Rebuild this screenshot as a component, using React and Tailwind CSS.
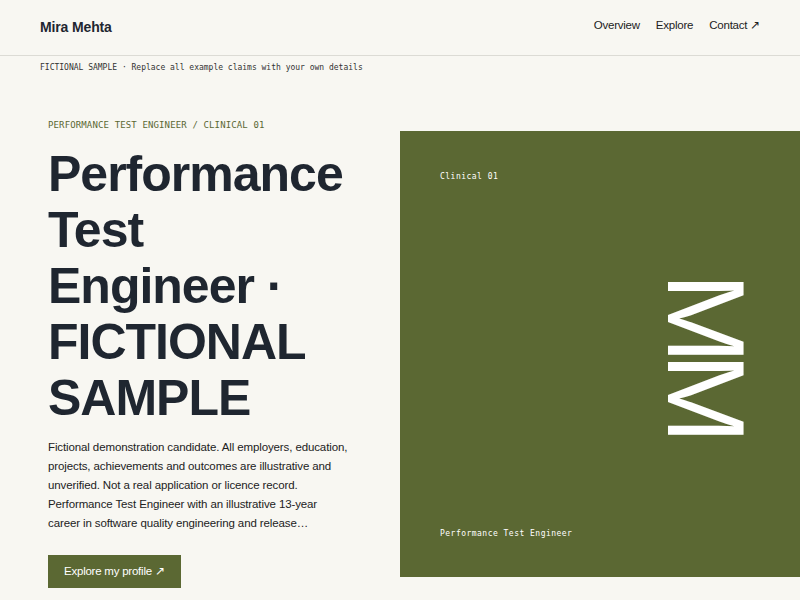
const sans = { fontFamily: '"Liberation Sans", Arial, Helvetica, sans-serif' };
const mono = { fontFamily: '"DejaVu Sans Mono", "Liberation Mono", monospace' };

const NAV = ['Overview', 'Explore', 'Contact ↗'];

export default function App() {
  return (
    <div className="min-h-screen bg-[#f8f7f2] text-[#1f2630]" style={sans}>
      <header className="flex h-14 items-center justify-between border-b border-[#dcdbd5] px-10">
        <span className="text-[14px] font-bold tracking-[-0.01em]">Mira Mehta</span>
        <nav className="mb-[4px] flex items-center gap-4 text-[11.5px] tracking-[-0.02em] text-[#222]">
          {NAV.map((item) => (
            <a key={item} href="#">
              {item}
            </a>
          ))}
        </nav>
      </header>

      <div className="px-10 pt-[6px] text-[8px] leading-[12px] text-[#333]" style={mono}>
        FICTIONAL SAMPLE · Replace all example claims with your own details
      </div>

      <section className="flex items-center pt-[45px]">
        <div className="w-[400px] shrink-0 pl-12">
          <p
            className="text-[9px] leading-[12px] tracking-[0.015em] text-[#5b6833]"
            style={mono}
          >
            PERFORMANCE TEST ENGINEER / CLINICAL 01
          </p>
          <h1 className="mt-[15px] w-[310px] text-[50px] font-bold leading-[56px] tracking-[-0.02em]">
            Performance Test Engineer · FICTIONAL SAMPLE
          </h1>
          <p className="mt-3 w-[302px] text-[11.5px] leading-[19px] tracking-[-0.01em] text-[#222]">
            Fictional demonstration candidate. All employers, education, projects, achievements
            and outcomes are illustrative and unverified. Not a real application or licence
            record. Performance Test Engineer with an illustrative 13-year career in software
            quality engineering and release…
          </p>
          <a
            href="#"
            className="mt-[22px] inline-flex h-[33px] items-center bg-[#5b6833] px-4 text-[11.5px] tracking-[-0.02em] text-white"
          >
            Explore my profile ↗
          </a>
        </div>

        <div className="flex h-[446px] w-[400px] shrink-0 flex-col bg-[#5b6833] px-10 pb-[37px] pt-10 text-white">
          <span className="text-[8px] leading-[12px] tracking-[0.06em]" style={mono}>
            Clinical 01
          </span>
          <div className="mb-1 flex flex-1 items-center justify-end">
            <span className="text-[109px] leading-none tracking-[-0.1em] [writing-mode:vertical-rl]">
              MM
            </span>
          </div>
          <span className="text-[8px] leading-[12px] tracking-[0.06em]" style={mono}>
            Performance Test Engineer
          </span>
        </div>
      </section>
    </div>
  );
}
